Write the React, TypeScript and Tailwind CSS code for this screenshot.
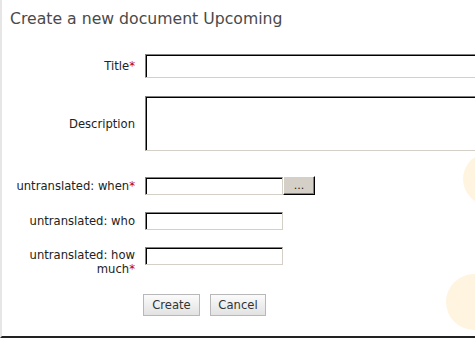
const inputCls =
  "block shrink-0 bg-white border border-[#d4d0c8] border-t-[#808080] border-l-[#808080] shadow-[inset_1px_1px_0_#000] outline-none";

function Req() {
  return <span className="text-[#c00000]">*</span>;
}

export default function App() {
  return (
    <div
      className="relative w-[475px] h-[338px] overflow-hidden bg-white border-l-2 border-l-[#e6e6e6] border-b-2 border-b-[#222]"
      style={{ fontFamily: '"DejaVu Sans", Verdana, sans-serif' }}
    >
      {/* decorative circles */}
      <div className="absolute left-[461px] top-[153px] w-[52px] h-[52px] rounded-full bg-[#fff4e0]" />
      <div className="absolute left-[444px] top-[274px] w-[56px] h-[56px] rounded-full bg-[#fff4e0]" />

      <div className="relative">
        {/* Header */}
        <h2 className="pl-2 pt-[10px] text-[15.7px] leading-[18px] text-[#4a4a4a]">
          Create a new document Upcoming
        </h2>

        {/* Form */}
        <div className="mt-[26px] text-[11.6px] leading-[14px] text-[#222]">
          <div className="flex items-center gap-[10px]">
            <label className="w-[133px] shrink-0 text-right">
              Title<Req />
            </label>
            <input className={`${inputCls} w-[340px] h-[24px]`} />
          </div>

          <div className="mt-[18px] flex items-center gap-[10px]">
            <label className="w-[133px] shrink-0 text-right">Description</label>
            <textarea className={`${inputCls} w-[340px] h-[55px] resize-none`} />
          </div>

          <div className="mt-[25px] flex items-center gap-[10px]">
            <label className="w-[133px] shrink-0 text-right">
              untranslated: when<Req />
            </label>
            <div className="flex items-center">
              <input className={`${inputCls} w-[138px] h-[18px]`} />
              <button className="w-[32px] h-[19px] bg-[#d4d0c8] border border-t-white border-l-white border-b-black border-r-black shadow-[inset_-1px_-1px_0_#808080] text-[11px] leading-[11px] text-[#222]">
                ...
              </button>
            </div>
          </div>

          <div className="mt-[17px] flex items-center gap-[10px]">
            <label className="w-[133px] shrink-0 text-right">untranslated: who</label>
            <input className={`${inputCls} w-[138px] h-[18px]`} />
          </div>

          <div className="mt-[17px] flex items-start gap-[10px]">
            <label className="w-[133px] shrink-0 text-right pt-[1px]">
              untranslated: how
              <br />
              much<Req />
            </label>
            <input className={`${inputCls} w-[138px] h-[18px]`} />
          </div>

          <div className="mt-[18px] flex gap-[10px] pl-[141px]">
            <button className="h-[22px] w-[57px] border border-[#b8b8b8] bg-linear-to-b from-[#fbfbfb] to-[#e2e2e2] text-[11.6px] text-[#333]">
              Create
            </button>
            <button className="h-[22px] w-[56px] border border-[#b8b8b8] bg-linear-to-b from-[#fbfbfb] to-[#e2e2e2] text-[11.6px] text-[#333]">
              Cancel
            </button>
          </div>
        </div>
      </div>
    </div>
  );
}
